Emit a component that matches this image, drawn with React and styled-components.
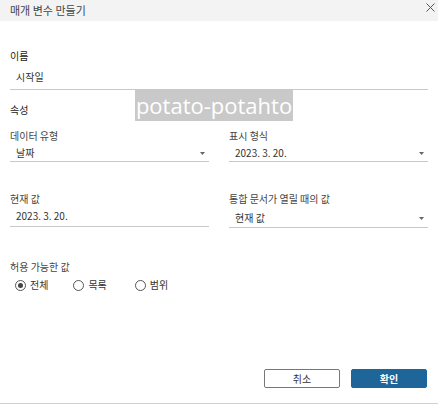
import React from 'react';
import styled, { createGlobalStyle } from 'styled-components';

const GlobalStyle = createGlobalStyle`
  html, body { margin: 0; padding: 0; background: #fff; }
  body { font-family: "Noto Sans CJK KR", "Noto Sans", sans-serif; }
  * { box-sizing: border-box; }
`;

const Dialog = styled.div`
  position: relative;
  width: 438px;
  height: 404px;
  display: flex;
  flex-direction: column;
  border-bottom: 1px solid #d2d2d2;
  background: #fff;
  color: #444;
`;

const TitleBar = styled.div`
  flex: none;
  height: 21px;
  background: #f3f3f3;
  display: flex;
  justify-content: space-between;
  padding: 0 3px 0 10px;
`;

const Title = styled.span`
  font-size: 11px;
  line-height: 21px;
  color: #444;
`;

const CloseButton = styled.button`
  border: 0;
  background: none;
  padding: 0;
  margin-top: 3px;
  width: 9px;
  height: 9px;
  display: flex;
  cursor: pointer;
`;

const Body = styled.div`
  flex: 1;
  display: flex;
  flex-direction: column;
  padding: 0 10px;
`;

const SectionTitle = styled.div`
  font-size: 10px;
  line-height: 16px;
  color: #222;
  margin-top: ${p => p.$mt}px;
`;

const Label = styled.div`
  font-size: 10px;
  line-height: 16px;
  color: #444;
  margin-top: ${p => p.$mt || 0}px;
`;

const Field = styled.div`
  display: flex;
  align-items: center;
  justify-content: space-between;
  font-size: 10px;
  line-height: 16px;
  color: #333;
  padding: 0 4px ${p => p.$pb || 0}px 6px;
  margin-top: ${p => p.$mt || 0}px;
  border-bottom: 1px solid #c8c8c8;
`;

const Columns = styled.div`
  display: grid;
  grid-template-columns: 1fr 1fr;
  column-gap: 20px;
  margin-top: ${p => p.$mt}px;
`;

const Column = styled.div`
  display: flex;
  flex-direction: column;
`;

const RadioGroup = styled.div`
  display: flex;
  align-items: center;
  margin-top: 2px;
  padding-left: 5px;
`;

const RadioItem = styled.label`
  display: flex;
  align-items: center;
  gap: 4px;
  font-size: 10px;
  line-height: 16px;
  color: #333;
  margin-right: ${p => p.$mr}px;
`;

const RadioCircle = styled.span`
  width: 11px;
  height: 11px;
  border-radius: 50%;
  border: 1px solid #555;
  display: flex;
  align-items: center;
  justify-content: center;
  &::after {
    content: '';
    width: 5px;
    height: 5px;
    border-radius: 50%;
    background: ${p => (p.$checked ? '#444' : 'transparent')};
  }
`;

const Footer = styled.div`
  margin-top: auto;
  display: flex;
  justify-content: flex-end;
  gap: 11px;
  padding: 0 11px 15px 0;
`;

const Button = styled.button`
  width: 76px;
  height: 19px;
  padding: 0;
  border-radius: 2px;
  font-family: "Noto Sans CJK KR", sans-serif;
  font-size: 10px;
  line-height: 17px;
  border: 1px solid ${p => (p.$primary ? '#1e6699' : '#777')};
  background: ${p => (p.$primary ? '#1e6699' : '#fff')};
  color: ${p => (p.$primary ? '#fff' : '#333')};
  font-weight: ${p => (p.$primary ? 700 : 400)};
`;

const Watermark = styled.div`
  position: absolute;
  left: 135px;
  top: 90px;
  width: 158px;
  height: 31px;
  background: #c9c9c9;
  color: #fff;
  font-family: "Open Sans", "Noto Sans", sans-serif;
  font-size: 22px;
  line-height: 30px;
  text-align: center;
  white-space: nowrap;
`;

const Caret = () => (
  <svg width="5" height="3" viewBox="0 0 5 3">
    <path d="M0 0H5L2.5 3Z" fill="#666" />
  </svg>
);

export default function App() {
  return (
    <>
      <GlobalStyle />
      <Dialog>
        <TitleBar>
          <Title>매개 변수 만들기</Title>
          <CloseButton aria-label="닫기">
            <svg width="9" height="9" viewBox="0 0 9 9">
              <path d="M0.5 0.5L8.5 8.5M8.5 0.5L0.5 8.5" stroke="#555" strokeWidth="1" />
            </svg>
          </CloseButton>
        </TitleBar>
        <Body>
          <SectionTitle $mt={27}>이름</SectionTitle>
          <Field $mt={5} $pb={4}>시작일</Field>
          <SectionTitle $mt={12}>속성</SectionTitle>
          <Columns $mt={10}>
            <Column>
              <Label>데이터 유형</Label>
              <Field $mt={1}>날짜<Caret /></Field>
            </Column>
            <Column>
              <Label>표시 형식</Label>
              <Field $mt={1}>2023. 3. 20.<Caret /></Field>
            </Column>
          </Columns>
          <Columns $mt={29}>
            <Column>
              <Label>현재 값</Label>
              <Field $mt={1} $pb={2}>2023. 3. 20.</Field>
            </Column>
            <Column>
              <Label>통합 문서가 열릴 때의 값</Label>
              <Field $mt={3} $pb={1}>현재 값<Caret /></Field>
            </Column>
          </Columns>
          <Label $mt={31}>허용 가능한 값</Label>
          <RadioGroup>
            <RadioItem $mr={25}><RadioCircle $checked />전체</RadioItem>
            <RadioItem $mr={28}><RadioCircle />목록</RadioItem>
            <RadioItem $mr={0}><RadioCircle />범위</RadioItem>
          </RadioGroup>
        </Body>
        <Footer>
          <Button>취소</Button>
          <Button $primary>확인</Button>
        </Footer>
        <Watermark>potato-potahto</Watermark>
      </Dialog>
    </>
  );
}
